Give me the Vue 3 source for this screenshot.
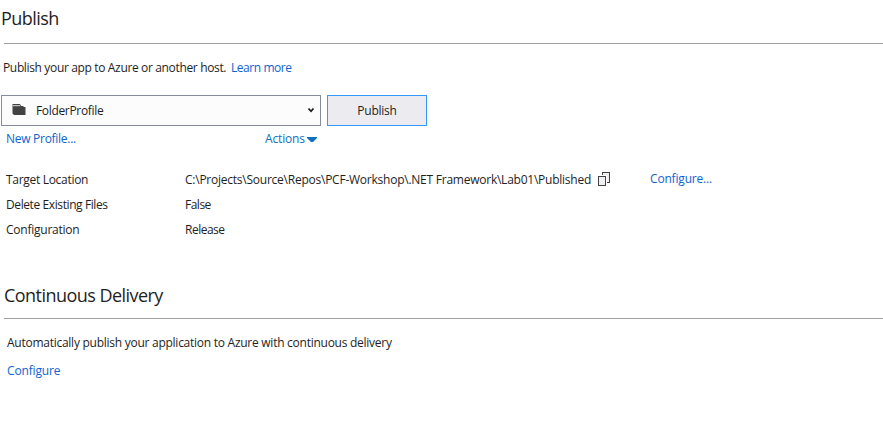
<script setup>
const settings = [
  { key: 'target', label: 'Target Location', value: 'C:\\Projects\\Source\\Repos\\PCF-Workshop\\.NET Framework\\Lab01\\Published', copy: true },
  { key: 'delete', label: 'Delete Existing Files', value: 'False' },
  { key: 'config', label: 'Configuration', value: 'Release' },
]
</script>

<template>
  <main class="page">
    <h1 class="title">Publish</h1>
    <hr class="rule" />
    <p class="intro">
      <span class="t-intro">Publish your app to Azure or another host.</span>
      <a class="link t-learn">Learn more</a>
    </p>

    <div class="controls">
      <div class="select">
        <svg class="folder" width="14" height="11" viewBox="0 0 14 11">
          <path d="M0.5 0H8l1 2h2.5v1h2v8H2L0.5 9.5z" fill="#424242" />
          <path d="M1 1.7h7" stroke="#dcdcdc" stroke-width="1" />
        </svg>
        <span class="t-folder">FolderProfile</span>
        <svg class="chevron" width="6" height="5" viewBox="0 0 6 5">
          <path d="M0.5 0.5L3 3.3L5.5 0.5" fill="none" stroke="#1e1e1e" stroke-width="1.7" />
        </svg>
      </div>
      <button class="publish"><span class="t-button">Publish</span></button>
    </div>

    <div class="links">
      <a class="link t-new">New Profile...</a>
      <a class="link actions"><span class="t-actions">Actions</span>
        <svg class="caret" width="10" height="5" viewBox="0 0 10 5"><path d="M0 0h10v1L6 5H4L0 1z" fill="#0e70c0" /></svg>
      </a>
    </div>

    <section class="settings">
      <div v-for="s in settings" :key="s.key" class="row">
        <span class="label" :class="'l-' + s.key">{{ s.label }}</span>
        <span class="value" :class="{ path: s.copy }">{{ s.value }}</span>
        <svg v-if="s.copy" class="copy" width="13" height="15" viewBox="0 0 13 15">
          <rect x="4.5" y="0.5" width="7" height="10" fill="#f0eff1" stroke="#424242" />
          <rect x="-0.5" y="3" width="9.5" height="12" fill="#fff" />
          <rect x="0.5" y="4.5" width="7" height="9" fill="#f0eff1" stroke="#424242" />
        </svg>
        <a v-if="s.copy" class="link configure">Configure...</a>
      </div>
    </section>

    <h2 class="title second">Continuous Delivery</h2>
    <hr class="rule" />
    <p class="auto">Automatically publish your application to Azure with continuous delivery</p>
    <p class="conf"><a class="link t-conf">Configure</a></p>
  </main>
</template>

<style>
body {
  background: #fff;
}
</style>

<style scoped>
.page {
  height: 424px;
  overflow: hidden;
  font-family: "Open Sans", "Noto Sans", sans-serif;
  font-size: 12px;
  line-height: 16px;
  color: #1e1e1e;
  white-space: nowrap;
}
p {
  margin: 0;
}
.link {
  color: #0e63d0;
}
.title {
  margin: 0;
  height: 43px;
  padding: 6px 0 0 1px;
  box-sizing: border-box;
  font-size: 18px;
  font-weight: 400;
  line-height: 24px;
  letter-spacing: -0.54px;
}
.rule {
  height: 1px;
  margin: 0 0 0 4px;
  border: 0;
  background: #a0a0a0;
}
.intro {
  display: flex;
  padding: 16px 0 0 3px;
}
.t-intro {
  width: 228px;
  letter-spacing: -0.35px;
}
.t-learn {
  letter-spacing: -0.44px;
}
.controls {
  display: flex;
  gap: 6px;
  padding: 19px 0 0 1px;
}
.select {
  display: flex;
  align-items: center;
  box-sizing: border-box;
  width: 320px;
  height: 31px;
  padding: 0 6px 0 10px;
  border: 1px solid #858c9c;
  background: #fcfcfc;
}
.folder {
  margin: -2px 10px 0 0;
}
.t-folder {
  letter-spacing: -0.33px;
}
.chevron {
  margin: -1px 0 0 auto;
}
.publish {
  box-sizing: border-box;
  width: 100px;
  height: 31px;
  padding: 0;
  border: 1px solid #3399ff;
  background: #ececf0;
  color: #1e1e1e;
  font: inherit;
}
.t-button {
  letter-spacing: -0.25px;
}
.links {
  display: flex;
  padding: 5px 0 0 6px;
}
.t-new {
  width: 259px;
  letter-spacing: -0.28px;
}
.actions {
  display: flex;
  align-items: center;
  color: #0e70c0;
}
.t-actions {
  width: 42px;
  letter-spacing: -0.15px;
}
.caret {
  margin-top: 1px;
}
.settings {
  padding: 20px 0 0 6px;
}
.row {
  display: flex;
  height: 25px;
  padding-top: 5px;
  box-sizing: border-box;
}
.label {
  width: 179px;
}
.l-target {
  letter-spacing: -0.3px;
}
.l-delete {
  letter-spacing: -0.4px;
}
.l-config {
  letter-spacing: -0.24px;
}
.value {
  letter-spacing: -0.5px;
}
.path {
  width: 412px;
  letter-spacing: -0.24px;
}
.copy {
  margin: 0 0 0 1px;
}
.configure {
  margin: -1px 0 0 39px;
  letter-spacing: -0.18px;
}
.second {
  height: 44px;
  margin-top: 32px;
  padding: 9px 0 0 4px;
}
.auto {
  padding: 16px 0 0 7px;
  letter-spacing: -0.26px;
}
.conf {
  padding: 12px 0 0 7px;
}
.t-conf {
  letter-spacing: -0.15px;
}
</style>
